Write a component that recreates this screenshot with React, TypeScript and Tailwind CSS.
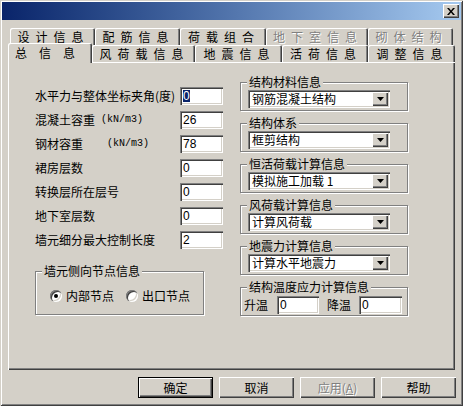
import React from 'react';

const sunken =
  'shadow-[inset_1px_1px_#808080,inset_2px_2px_#404040,inset_-1px_-1px_#fff,inset_-2px_-2px_#d4d0c8]';
const raised =
  'shadow-[inset_1px_1px_#fff,inset_-1px_-1px_#404040,inset_-2px_-2px_#808080]';
const grayText = 'text-[#808080] [text-shadow:1px_1px_0_#fff]';

function Field({
  value,
  selected,
  width = 'w-[43px]',
}: {
  value: string;
  selected?: boolean;
  width?: string;
}) {
  return (
    <div
      className={`flex h-[18px] ${width} shrink-0 items-center bg-white pl-[3px] ${sunken} font-['Liberation_Sans',sans-serif] text-[12px] leading-none text-black`}
    >
      {selected ? (
        <span className="bg-[#0a246a] text-white">{value}</span>
      ) : (
        value
      )}
    </div>
  );
}

function Combo({ value }: { value: string }) {
  return (
    <div className={`flex h-[18px] w-[142px] bg-white p-[2px] ${sunken}`}>
      <div className="flex flex-1 items-center pl-[2px] text-[12px] leading-[14px]">
        {value}
      </div>
      <div
        className={`flex w-[16px] items-center justify-center bg-[#d4d0c8] ${raised}`}
      >
        <svg width="7" height="4" viewBox="0 0 7 4">
          <path d="M0 0h7L3.5 4z" fill="#000" />
        </svg>
      </div>
    </div>
  );
}

function Group({
  title,
  className,
  children,
}: {
  title: string;
  className: string;
  children: React.ReactNode;
}) {
  return (
    <div
      className={`relative border border-[#808080] shadow-[inset_1px_1px_#fff,1px_1px_#fff] ${className}`}
    >
      <span className="absolute -top-[8px] left-[6px] bg-[#d4d0c8] px-[2px] text-[12px] leading-[14px]">
        {title}
      </span>
      {children}
    </div>
  );
}

function Radio({ checked, label }: { checked?: boolean; label: string }) {
  return (
    <div className="flex items-center gap-[4px]">
      <div
        className={`flex h-[12px] w-[12px] items-center justify-center rounded-full bg-white shadow-[inset_1px_1px_#808080,inset_2px_2px_#404040,inset_-1px_-1px_#fff,inset_-2px_-2px_#d4d0c8]`}
      >
        {checked && <div className="h-[4px] w-[4px] rounded-full bg-black" />}
      </div>
      <span className="text-[12px] leading-[14px]">{label}</span>
    </div>
  );
}

function Tab({
  label,
  width,
  disabled,
  wide,
}: {
  label: string;
  width: string;
  disabled?: boolean;
  wide?: boolean;
}) {
  return (
    <div
      className={`flex h-[17px] ${width} items-center justify-center rounded-t-[2px] bg-[#d4d0c8] shadow-[inset_1px_1px_#fff,inset_-1px_0_#404040,inset_-2px_0_#808080] text-[12px] leading-[14px] ${
        wide ? 'tracking-[12px]' : 'tracking-[6px]'
      } ${disabled ? grayText : 'text-black'}`}
    >
      <span className="pl-[2px]">{label}</span>
    </div>
  );
}

function Button({
  label,
  isDefault,
  disabled,
}: {
  label: React.ReactNode;
  isDefault?: boolean;
  disabled?: boolean;
}) {
  return (
    <div
      className={`flex h-[21px] w-[75px] items-center justify-center bg-[#d4d0c8] text-[12px] leading-[14px] ${
        isDefault
          ? 'shadow-[inset_0_0_0_1px_#000,inset_1px_1px_0_1px_#fff,inset_-1px_-1px_0_1px_#404040,inset_-2px_-2px_0_1px_#808080]'
          : raised
      } ${disabled ? grayText : 'text-black'}`}
    >
      {label}
    </div>
  );
}

const rows: { label: React.ReactNode; value: string; selected?: boolean }[] = [
  { label: '水平力与整体坐标夹角(度)', value: '0', selected: true },
  {
    label: (
      <>
        <span>混凝土容重</span>
        <span className="ml-[6px] font-['Liberation_Mono',monospace] text-[10px]">
          (kN/m3)
        </span>
      </>
    ),
    value: '26',
  },
  {
    label: (
      <>
        <span>钢材容重</span>
        <span className="ml-[24px] font-['Liberation_Mono',monospace] text-[10px]">
          (kN/m3)
        </span>
      </>
    ),
    value: '78',
  },
  { label: '裙房层数', value: '0' },
  { label: '转换层所在层号', value: '0' },
  { label: '地下室层数', value: '0' },
  { label: '墙元细分最大控制长度', value: '2' },
];

export default function App() {
  return (
    <div
      className={`flex h-[406px] w-[463px] flex-col bg-[#d4d0c8] font-['Noto_Sans_CJK_SC',sans-serif] text-black shadow-[inset_1px_1px_#d4d0c8,inset_-1px_-1px_#404040,inset_2px_2px_#fff,inset_-2px_-2px_#808080]`}
    >
      {/* title bar */}
      <div className="mx-[2px] mt-[2px] flex h-[18px] items-center justify-end bg-linear-to-r from-[#0a246a] to-[#a6caf0] pr-[2px]">
        <div
          className={`flex h-[14px] w-[16px] items-center justify-center bg-[#d4d0c8] ${raised}`}
        >
          <svg width="8" height="7" viewBox="0 0 8 7">
            <path
              d="M0 0h2l2 2.4L6 0h2L5 3.5 8 7H6L4 4.6 2 7H0l3-3.5z"
              fill="#000"
            />
          </svg>
        </div>
      </div>

      {/* tabs */}
      <div className="mt-[8px] ml-[10px] flex h-[17px]">
        <Tab label="设计信息" width="w-[85px]" />
        <Tab label="配筋信息" width="w-[85px]" />
        <Tab label="荷载组合" width="w-[86px]" />
        <Tab label="地下室信息" width="w-[102px]" disabled />
        <Tab label="砌体结构" width="w-[85px]" disabled />
      </div>
      <div className="ml-[8px] flex h-[17px] items-start">
        <div className="relative z-10 -mt-[2px] flex h-[20px] w-[84px] items-center justify-center rounded-t-[2px] bg-[#d4d0c8] pb-[1px] text-[12px] leading-[14px] tracking-[12px] shadow-[inset_1px_1px_#fff,inset_-1px_0_#404040,inset_-2px_0_#808080]">
          <span className="pl-[2px]">总信息</span>
        </div>
        <Tab label="风荷载信息" width="w-[103px]" />
        <Tab label="地震信息" width="w-[87px]" />
        <Tab label="活荷信息" width="w-[86px]" />
        <Tab label="调整信息" width="w-[87px]" />
      </div>

      {/* panel */}
      <div className="ml-[8px] flex h-[308px] w-[447px] pt-[20px] pl-[27px] shadow-[inset_1px_1px_#fff,inset_-1px_-1px_#404040,inset_-2px_-2px_#808080]">
        <div className="mt-[5px] flex w-[188px] flex-col">
          <div className="flex flex-col gap-[6px]">
            {rows.map((r, i) => (
              <div key={i} className="flex h-[18px] items-center">
                <div className="flex w-[145px] shrink-0 items-center text-[12px] leading-[14px] whitespace-nowrap">
                  {r.label}
                </div>
                <Field value={r.value} selected={r.selected} />
              </div>
            ))}
          </div>
          <Group title="墙元侧向节点信息" className="mt-[22px] h-[44px] w-[169px]">
            <div className="flex items-center gap-[12px] pt-[17px] pl-[14px]">
              <Radio checked label="内部节点" />
              <Radio label="出口节点" />
            </div>
          </Group>
        </div>

        <div className="ml-[17px] flex flex-col gap-[12px]">
          <Group title="结构材料信息" className="h-[29px] w-[168px] pt-[7px] pl-[7px]">
            <Combo value="钢筋混凝土结构" />
          </Group>
          <Group title="结构体系" className="h-[29px] w-[168px] pt-[7px] pl-[7px]">
            <Combo value="框剪结构" />
          </Group>
          <Group title="恒活荷载计算信息" className="h-[29px] w-[168px] pt-[7px] pl-[7px]">
            <Combo value="模拟施工加载 1" />
          </Group>
          <Group title="风荷载计算信息" className="h-[29px] w-[168px] pt-[7px] pl-[7px]">
            <Combo value="计算风荷载" />
          </Group>
          <Group title="地震力计算信息" className="h-[29px] w-[168px] pt-[7px] pl-[7px]">
            <Combo value="计算水平地震力" />
          </Group>
          <Group title="结构温度应力计算信息" className="h-[29px] w-[168px] pt-[8px] pl-[3px]">
            <div className="flex h-[17px] items-center text-[12px] leading-[14px]">
              <span>升温</span>
              <div className="ml-[9px]">
                <Field value="0" width="w-[42px]" />
              </div>
              <span className="ml-[8px]">降温</span>
              <div className="ml-[8px]">
                <Field value="0" width="w-[43px]" />
              </div>
            </div>
          </Group>
        </div>
      </div>

      {/* buttons */}
      <div className="mt-[7px] flex justify-end gap-[6px] pr-[7px]">
        <Button label="确定" isDefault />
        <Button label="取消" />
        <Button
          label={
            <>
              应用(<span className="underline">A</span>)
            </>
          }
          disabled
        />
        <Button label="帮助" />
      </div>
    </div>
  );
}
